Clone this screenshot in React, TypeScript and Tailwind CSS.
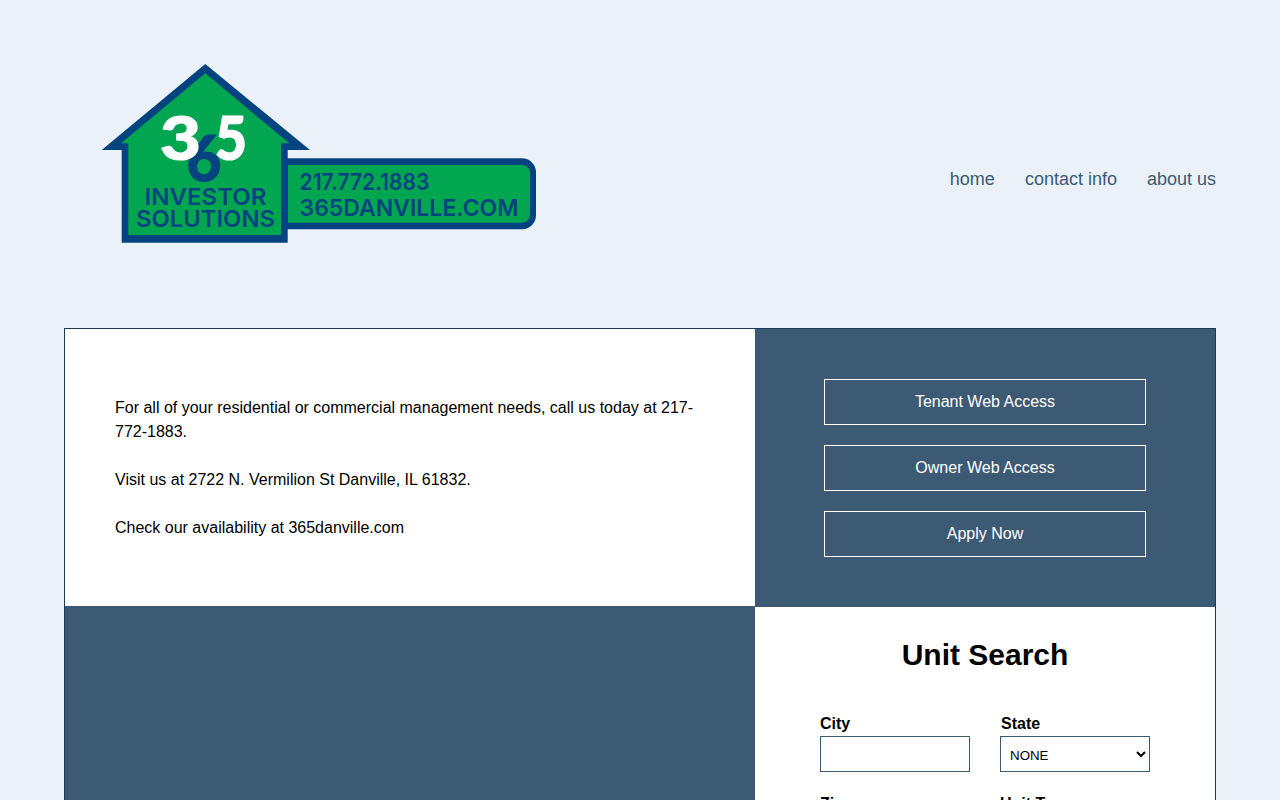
import React from "react";

function Logo() {
  const font = "Inter, 'Open Sans', sans-serif";
  const digits = "Lato, Inter, sans-serif";
  return (
    <svg width="440" height="184" viewBox="100 62 440 184" className="block" aria-label="365 Investor Solutions">
      <path d="M205.3 64 L310 150 L287.7 150 L287.7 158.3 L522 158.3 A14 14 0 0 1 536 172.3 L536 215.3 A14 14 0 0 1 522 229.3 L287.7 229.3 L287.7 242.7 L121.7 242.7 L121.7 150 L101.7 150 Z" fill="#034380" />
      <path d="M205.3 73.3 L289.3 143.3 L281 143.3 L281 235 L128.3 235 L128.3 143.3 L121 143.3 Z" fill="#02a651" />
      <path d="M288 165 L522 165 A8 8 0 0 1 530 173 L530 214.7 A8 8 0 0 1 522 222.7 L288 222.7 Z" fill="#02a651" />
      <text x="186.5" y="180.5" fontFamily={digits} fontWeight="900" fontSize="62" fill="#034380" stroke="#034380" strokeWidth="1" textLength="35" lengthAdjust="spacingAndGlyphs">6</text>
      <text x="160" y="159.5" fontFamily={digits} fontWeight="900" fontSize="60" fill="#fff" stroke="#fff" strokeWidth="1.2" textLength="41" lengthAdjust="spacingAndGlyphs">3</text>
      <text x="215" y="159.5" fontFamily={digits} fontWeight="900" fontSize="60" fill="#fff" stroke="#fff" strokeWidth="1.2" textLength="32" lengthAdjust="spacingAndGlyphs">5</text>
      <text x="144.5" y="205" fontFamily={font} fontWeight="600" fontSize="23" fill="#034380" textLength="122" lengthAdjust="spacingAndGlyphs">INVESTOR</text>
      <text x="136" y="226.7" fontFamily={font} fontWeight="600" fontSize="23" fill="#034380" textLength="139" lengthAdjust="spacingAndGlyphs">SOLUTIONS</text>
      <text x="299.5" y="190.2" fontFamily={font} fontWeight="600" fontSize="23" fill="#034380" textLength="130" lengthAdjust="spacingAndGlyphs">217.772.1883</text>
      <text x="299.5" y="216.2" fontFamily={font} fontWeight="600" fontSize="23" fill="#034380" textLength="219" lengthAdjust="spacingAndGlyphs">365DANVILLE.COM</text>
    </svg>
  );
}

function Btn({ children }: { children: React.ReactNode }) {
  return (
    <a className="flex h-[46px] w-[322px] items-center justify-center border border-white text-white">{children}</a>
  );
}

const inputCls = "h-9 w-[150px] border border-[#3c5a74] bg-white";
const selectCls = "h-9 w-[150px] border border-[#3c5a74] bg-white pl-[5px] pt-[2px] text-[13.33px]";

function Field({ label, children, className = "" }: { label: string; children: React.ReactNode; className?: string }) {
  return (
    <div className={className}>
      <label className="block h-6 font-bold leading-6">{label}</label>
      {children}
    </div>
  );
}

export default function App() {
  return (
    <div className="min-h-screen bg-[#eaf1f8] px-16 pb-16 text-base text-black" style={{ fontFamily: "'Liberation Sans', Arial, sans-serif" }}>
      <header className="flex h-[328px] items-start justify-between">
        <div className="ml-9 mt-[62px]"><Logo /></div>
        <nav className="mt-[165px] flex gap-[30px] text-lg text-[#3c5a74]">
          <a>home</a>
          <a>contact info</a>
          <a>about us</a>
        </nav>
      </header>
      <main className="flex border border-[#1d3b58]">
        <div className="flex w-[690px] flex-col">
          <section className="flex h-[277px] items-center bg-white px-[50px] leading-6">
            <p>
              For all of your residential or commercial management needs, call us today at 217-772-1883.
              <br /><br />
              Visit us at 2722 N. Vermilion St Danville, IL 61832.
              <br /><br />
              Check our availability at 365danville.com
            </p>
          </section>
          <section className="flex-1 bg-[#3c5a74]" />
        </div>
        <div className="flex w-[460px] flex-col">
          <section className="flex h-[278px] flex-col items-center gap-5 bg-[#3c5a74] py-[50px]">
            <Btn>Tenant Web Access</Btn>
            <Btn>Owner Web Access</Btn>
            <Btn>Apply Now</Btn>
          </section>
          <section className="bg-white pb-[50px] pt-[30px]">
            <h2 className="text-center text-[30px] font-bold leading-[36px]">Unit Search</h2>
            <div className="mt-[39px] grid grid-cols-[150px_150px] gap-x-[30px] gap-y-[20px] pl-[65px]">
              <Field label="City"><input className={inputCls} /></Field>
              <Field label="State" className="[&>label]:pl-px">
                <select className={selectCls}><option>NONE</option></select>
              </Field>
              <Field label="Zip"><input className={inputCls} /></Field>
              <Field label="Unit Type">
                <select className={selectCls}><option>NONE</option></select>
              </Field>
            </div>
          </section>
        </div>
      </main>
    </div>
  );
}
